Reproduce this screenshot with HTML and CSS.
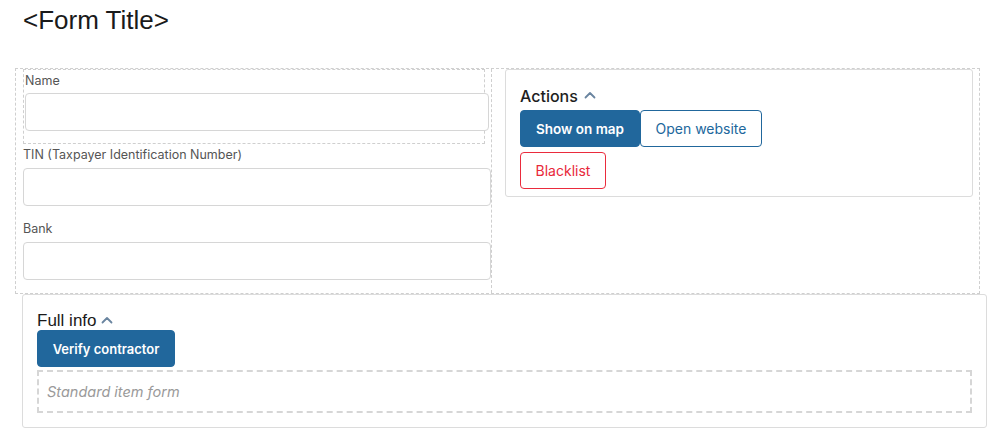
FILE: index.html
```html
<!DOCTYPE html>
<html lang="en">
<head>
<meta charset="utf-8">
<title>Form</title>
<link rel="stylesheet" href="styles.css">
</head>
<body>
<h1 class="title">&lt;Form Title&gt;</h1>
<div class="grid">
  <div class="col col-left">
    <div class="field field-name">
      <label class="label">Name</label>
      <div class="input input-wide"></div>
    </div>
    <div class="field field-tin">
      <label class="label">TIN (Taxpayer Identification Number)</label>
      <div class="input"></div>
    </div>
    <div class="field field-bank">
      <label class="label">Bank</label>
      <div class="input"></div>
    </div>
  </div>
  <div class="col col-right">
    <section class="card card-actions">
      <h2 class="card-title">Actions
        <svg class="chev" width="12" height="8" viewBox="0 0 12 8"><polyline points="1.5,6.5 6,2 10.5,6.5" fill="none" stroke="#6a85a0" stroke-width="1.8" stroke-linecap="round" stroke-linejoin="round"/></svg>
      </h2>
      <div class="btns">
        <button class="btn btn-primary">Show on map</button>
        <button class="btn btn-outline">Open website</button>
        <button class="btn btn-danger">Blacklist</button>
      </div>
    </section>
  </div>
</div>
<section class="card card-full">
  <h2 class="full-title">Full info
    <svg class="chev" width="12" height="8" viewBox="0 0 12 8"><polyline points="1.5,6.5 6,2 10.5,6.5" fill="none" stroke="#6a85a0" stroke-width="1.8" stroke-linecap="round" stroke-linejoin="round"/></svg>
  </h2>
  <button class="btn btn-primary btn-verify">Verify contractor</button>
  <div class="placeholder">Standard item form</div>
</section>
</body>
</html>
```

FILE: styles.css
```css
* { box-sizing: border-box; }
body {
  margin: 0;
  background: #fff;
  font-family: Inter, "Liberation Sans", sans-serif;
  color: #222;
}
.title {
  margin: 0;
  padding: 5px 0 0 23px;
  font-family: "Liberation Sans", Arial, sans-serif;
  font-weight: 400;
  font-size: 26px;
  line-height: 30px;
  color: #1a1a1a;
}
.grid {
  margin: 33px 0 0 15px;
  width: 965px;
  display: grid;
  grid-template-columns: 476px 1fr;
  border: 1px dashed #cfcfcf;
}
.col-left {
  border-right: 1px dashed #cfcfcf;
  padding: 0 0 13px 7px;
}
.field-name {
  width: 462px;
  height: 75px;
  border: 1px dashed #cfcfcf;
  padding: 2px 0 0 1px;
}
.field-tin { margin-top: 2px; }
.field-bank { margin-top: 14px; }
.label {
  display: block;
  font-size: 12.5px;
  line-height: 17px;
  color: #555;
  margin-bottom: 5px;
}
.field-name .label { margin-bottom: 4px; }
.input {
  height: 38px;
  border: 1px solid #d6d6d6;
  border-radius: 4px;
  background: #fff;
}
.input-wide { width: 464px; }
.col-right {
  padding: 0 6px 0 13px;
}
.card {
  border: 1px solid #dcdcdc;
  border-radius: 3px;
  background: #fff;
}
.card-actions {
  padding: 16px 14px 7px 14px;
}
.card-title {
  margin: 0 0 4px;
  font-size: 16px;
  line-height: 20px;
  font-weight: 500;
  color: #1e1e1e;
  display: flex;
  align-items: center;
  gap: 6px;
}
.chev { display: block; margin-top: -2px; }
.btns {
  display: flex;
  flex-wrap: wrap;
  row-gap: 5px;
  width: 260px;
}
.btn {
  height: 37px;
  padding: 0;
  font-family: Inter, "Liberation Sans", sans-serif;
  font-size: 14px;
  border-radius: 4px;
  background: #fff;
  cursor: pointer;
}
.btn-primary {
  background: #21679c;
  border: 1px solid #21679c;
  color: #fff;
  font-weight: 600;
  font-size: 13.5px;
  width: 120px;
}
.btn-outline {
  border: 1px solid #21679c;
  color: #21679c;
  font-weight: 400;
  width: 122px;
}
.btn-danger {
  border: 1px solid #ea2b3d;
  color: #e8283a;
  font-weight: 400;
  width: 86px;
}
.card-full {
  margin-left: 22px;
  width: 965px;
  padding: 18px 14px 14px 14px;
}
.full-title {
  margin: 0 0 1px;
  font-family: "Liberation Sans", Arial, sans-serif;
  font-size: 17px;
  line-height: 16px;
  font-weight: 400;
  color: #1a1a1a;
  display: flex;
  align-items: center;
  gap: 4px;
}
.btn-verify {
  display: block;
  width: 138px;
  font-size: 13px;
}
.placeholder {
  margin-top: 3px;
  height: 43px;
  border: 2px dashed #d6d6d6;
  display: flex;
  align-items: center;
  padding-left: 8px;
  font-size: 14.5px;
  font-style: italic;
  color: #9a9a9a;
}
```
